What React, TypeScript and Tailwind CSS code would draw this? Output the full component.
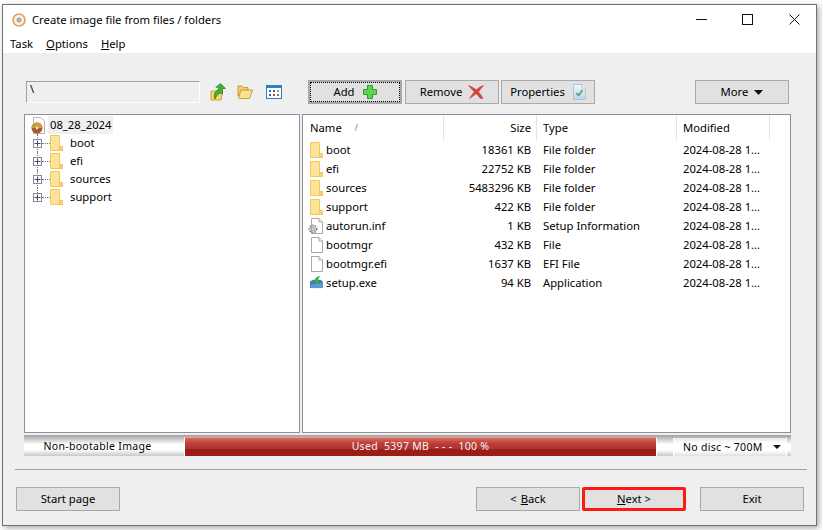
import type { ReactNode } from "react";

const treeItems = ["boot", "efi", "sources", "support"];

const files = [
  { name: "boot", size: "18361 KB", type: "File folder", icon: "folder" },
  { name: "efi", size: "22752 KB", type: "File folder", icon: "folder" },
  { name: "sources", size: "5483296 KB", type: "File folder", icon: "folder" },
  { name: "support", size: "422 KB", type: "File folder", icon: "folder" },
  { name: "autorun.inf", size: "1 KB", type: "Setup Information", icon: "inf" },
  { name: "bootmgr", size: "432 KB", type: "File", icon: "file" },
  { name: "bootmgr.efi", size: "1637 KB", type: "EFI File", icon: "file" },
  { name: "setup.exe", size: "94 KB", type: "Application", icon: "exe" },
];

function FolderIcon() {
  return (
    <svg width="13" height="16" viewBox="0 0 13 16" className="shrink-0">
      <path d="M0.5 0.5H9.5V11.5H12.5V15.5H0.5Z" fill="#fde39c" stroke="#efc95a" />
      <path d="M9.5 11.5H12.5V15.5H9.5Z" fill="#f7d36f" stroke="#efc95a" />
    </svg>
  );
}

function FileIcon({ gear }: { gear?: boolean }) {
  return (
    <svg width="15" height="16" viewBox="0 0 15 16" className="-ml-[2px] shrink-0">
      <path d="M3.5 0.5H11L14.5 4V15.5H3.5Z" fill="#ffffff" stroke="#a8a8a8" />
      <path d="M11 0.5V4H14.5" fill="#eeeeee" stroke="#a8a8a8" />
      {gear && (
        <g>
          <circle cx="5" cy="11" r="3.6" fill="none" stroke="#8a8a8a" strokeWidth="1.8" strokeDasharray="1.6 1" />
          <circle cx="5" cy="11" r="2" fill="#d4d4d4" stroke="#8a8a8a" strokeWidth="0.8" />
        </g>
      )}
    </svg>
  );
}

function ExeIcon() {
  return (
    <svg width="13" height="16" viewBox="0 0 14 16" className="shrink-0">
      <path d="M0 7L3 5H12L13.5 7V13H0Z" fill="#3f7fc4" stroke="#2e5f9a" strokeWidth="0.6" />
      <path d="M0.5 10L13 8V13H0.5Z" fill="#5b9bd8" />
      <path d="M7 9L3.5 5.5H5.5C5.5 3 7.5 1 10.5 1C9 2 8.5 3.5 8.5 5.5H10.5Z" fill="#2fbf3a" stroke="#1b8a25" strokeWidth="0.5" />
    </svg>
  );
}

function RowIcon({ kind }: { kind: string }) {
  if (kind === "folder") return <FolderIcon />;
  if (kind === "inf") return <FileIcon gear />;
  if (kind === "exe") return <ExeIcon />;
  return <FileIcon />;
}

function DiscIcon() {
  return (
    <svg width="14" height="14" viewBox="0 0 14 14" className="shrink-0">
      <circle cx="7" cy="7" r="6" fill="#f4f0ea" stroke="#ef9a52" strokeWidth="1.6" />
      <circle cx="7" cy="7" r="2" fill="#b9b9b9" stroke="#8b8b8b" strokeWidth="0.8" />
    </svg>
  );
}

function UpFolderIcon() {
  return (
    <svg width="16" height="18" viewBox="0 0 16 18">
      <path d="M1 8H6L7 9.5H12.5L11 17H1Z" fill="#f6d768" stroke="#c69a2a" strokeWidth="0.8" />
      <path d="M5 16C3.5 12 5 7.5 8.5 6.5V4L5.8 4.4L10.5 0.5L15.5 5.5H12.5V11C10.5 9 7 11 5 16Z" fill="#46b035" stroke="#23761e" strokeWidth="0.7" />
    </svg>
  );
}

function OpenFolderIcon() {
  return (
    <svg width="16" height="15" viewBox="0 0 16 15">
      <path d="M1 1H5L6.5 2.5H11V11H1Z" fill="#f3d06a" stroke="#b98b24" strokeWidth="0.8" />
      <path d="M1.5 12.5L4 5H15.5L12.5 13.5H2Z" fill="#fbe38e" stroke="#b98b24" strokeWidth="0.8" />
    </svg>
  );
}

function GridViewIcon() {
  return (
    <svg width="16" height="14" viewBox="0 0 16 14">
      <rect x="0.5" y="0.5" width="15" height="13" fill="#ffffff" stroke="#2f7fd0" />
      <rect x="1" y="1" width="14" height="2" fill="#2f7fd0" />
      <rect x="3" y="5" width="2" height="2" fill="#2f5fb0" />
      <rect x="7" y="5" width="2" height="2" fill="#2f5fb0" />
      <rect x="11" y="5" width="2" height="2" fill="#d9a02a" />
      <rect x="3" y="9" width="2" height="2" fill="#2f5fb0" />
      <rect x="7" y="9" width="2" height="2" fill="#c8402f" />
      <rect x="11" y="9" width="2" height="2" fill="#3f9f45" />
    </svg>
  );
}

function PlusIcon() {
  return (
    <svg width="14" height="14" viewBox="0 0 14 14">
      <path d="M4.5 0.5H9.5V4.5H13.5V9.5H9.5V13.5H4.5V9.5H0.5V4.5H4.5Z" fill="#5fd24e" stroke="#2f9e2a" />
    </svg>
  );
}

function RedXIcon() {
  return (
    <svg width="16" height="14" viewBox="0 0 16 14">
      <path d="M0.5 0.5C4.5 2 6.5 3.5 8.3 4.8C10.5 2.8 12.5 1.5 15.5 0.5C13.5 3 11.8 5 10.5 6.8C12.3 9 13.8 11 15 13.5L12 13.3C10.5 11 9.5 10 8 8.8C6 10.5 4 12 1.5 13.5C3 11 4.7 8.7 6.2 6.7C4.3 4.8 2.5 3 0.5 0.5Z" fill="#d8453c" stroke="#c0362e" strokeWidth="0.5" />
    </svg>
  );
}

function PropsIcon() {
  return (
    <svg width="13" height="16" viewBox="0 0 13 16">
      <defs>
        <linearGradient id="propsFill" x1="0" y1="0" x2="0" y2="1">
          <stop offset="0" stopColor="#f2f6fc" />
          <stop offset="1" stopColor="#bcd3ef" />
        </linearGradient>
      </defs>
      <path d="M0.5 0.5H9L12.5 4V15.5H0.5Z" fill="url(#propsFill)" stroke="#b4c4d8" />
      <path d="M9 0.5V4H12.5" fill="#ffffff" stroke="#b4c4d8" />
      <path d="M3.5 9L5.5 11.5L9.5 6" fill="none" stroke="#4aa56a" strokeWidth="1.6" />
    </svg>
  );
}

function RootIcon() {
  return (
    <svg width="16" height="17" viewBox="0 0 16 17" className="shrink-0">
      <path d="M3.5 0.5H10.5L14.5 4V16.5H3.5Z" fill="#ffffff" stroke="#b5b5b5" />
      <circle cx="7" cy="11" r="5.5" fill="#a85a2a" />
      <path d="M1.5 11A5.5 5.5 0 0 1 12.5 11Z" fill="#e0923c" />
      <circle cx="4.5" cy="9" r="1.6" fill="#6fbf4a" />
      <circle cx="7" cy="11" r="1.4" fill="#e8e0d0" />
    </svg>
  );
}

function Expander() {
  return (
    <div className="flex h-[9px] w-[9px] shrink-0 items-center justify-center border border-[#8a8a8a] bg-white">
      <svg width="7" height="7" viewBox="0 0 7 7">
        <path d="M0.5 3.5H6.5M3.5 0.5V6.5" stroke="#2a4f8f" strokeWidth="1" />
      </svg>
    </div>
  );
}

function Btn({ children, className = "" }: { children: ReactNode; className?: string }) {
  return (
    <button className={`flex h-6 items-center justify-center border border-[#a9a9a9] bg-[#e1e1e1] text-[11.25px] text-black ${className}`}>
      {children}
    </button>
  );
}

export default function App() {
  return (
    <div className="h-[530px] w-[823px] overflow-hidden bg-white pl-0.5 pt-1 font-['Noto_Sans',sans-serif] text-[11.25px] leading-4 text-black">
      <div className="flex h-[522px] w-[815px] flex-col border border-[#707070] bg-[#efefef] shadow-[2px_2px_6px_rgba(0,0,0,0.35)]">
        {/* Title and menu */}
        <div className="h-12 shrink-0 bg-white">
          <div className="flex h-[29px] items-center">
            <div className="ml-[9px] mr-[6px]">
              <DiscIcon />
            </div>
            <span>Create image file from files / folders</span>
            <div className="ml-auto flex h-full items-center">
              <svg width="11" height="11" viewBox="0 0 11 11" className="mr-[35px]">
                <path d="M0 5.5H11" stroke="#111" />
              </svg>
              <svg width="11" height="11" viewBox="0 0 11 11" className="mr-[36px]">
                <rect x="0.5" y="0.5" width="10" height="10" fill="none" stroke="#111" />
              </svg>
              <svg width="11" height="11" viewBox="0 0 11 11" className="mr-[16px]">
                <path d="M0.5 0.5L10.5 10.5M10.5 0.5L0.5 10.5" stroke="#111" />
              </svg>
            </div>
          </div>
          <div className="flex h-[19px] items-center gap-[13px] pl-[7px]">
            <span>Task</span>
            <span><u>O</u>ptions</span>
            <span><u>H</u>elp</span>
          </div>
        </div>

        {/* Toolbar */}
        <div className="mt-[27px] flex shrink-0 items-center pl-[23px]">
          <div className="flex h-[22px] w-[174px] border border-[#a0a0a0] border-b-white border-r-white bg-[#efefef] pl-[3px] leading-[14px]">\</div>
          <div className="ml-[10px] flex w-[16px] justify-center"><UpFolderIcon /></div>
          <div className="ml-[11px] flex w-[16px] justify-center"><OpenFolderIcon /></div>
          <div className="ml-[13px] flex w-[16px] justify-center"><GridViewIcon /></div>
          <Btn className="ml-[26px] w-[94px] gap-2 border-2 border-[#0078d7] outline-1 -outline-offset-3 outline-dotted outline-black">
            Add <PlusIcon />
          </Btn>
          <Btn className="ml-[3px] w-[94px] gap-[6px]">Remove <RedXIcon /></Btn>
          <Btn className="ml-[2px] w-[94px] gap-2">Properties <PropsIcon /></Btn>
          <Btn className="ml-[100px] w-[94px] gap-[6px]">
            More
            <svg width="9" height="5" viewBox="0 0 9 5"><path d="M0 0H9L4.5 5Z" fill="#111" /></svg>
          </Btn>
        </div>

        {/* Panels */}
        <div className="ml-[21px] mt-[10px] flex h-[319px] w-[767px] shrink-0 gap-0.5">
          <div className="w-[276px] border border-[#8f8f9d] bg-white pl-[5px] pt-px">
            <div className="flex h-[18px] items-center">
              <RootIcon />
              <span className="ml-[2px] bg-[#f0f0f0] px-[2px] leading-[18px]">08_28_2024</span>
            </div>
            {treeItems.map((item, i) => (
              <div key={item} className="relative flex h-[18px] items-center pl-[3px]">
                {/* tree connector lines */}
                <div className={`absolute left-[7px] top-0 border-l border-dotted border-[#777] ${i === treeItems.length - 1 ? "h-[9px]" : "h-[18px]"}`} />
                <div className="relative">
                  <Expander />
                </div>
                <div className="w-[8px] border-t border-dotted border-[#777]" />
                <FolderIcon />
                <span className="ml-[7px]">{item}</span>
              </div>
            ))}
          </div>

          <div className="flex-1 border border-[#8f8f9d] bg-white">
            <div className="flex h-[25px] items-center">
              <div className="flex h-full w-[141px] items-center border-r border-[#e5e5e5] pl-[7px]">
                Name
                <span className="ml-[13px] text-[8px] text-[#777]">/</span>
              </div>
              <div className="flex h-full w-[93px] items-center justify-end border-r border-[#e5e5e5] pr-[5px]">Size</div>
              <div className="flex h-full w-[140px] items-center border-r border-[#e5e5e5] pl-[6px]">Type</div>
              <div className="flex h-full w-[93px] items-center border-r border-[#e5e5e5] pl-[6px]">Modified</div>
            </div>
            {files.map((f) => (
              <div key={f.name} className="flex h-[19px] items-center">
                <div className="flex w-[141px] items-center gap-[3px] pl-[7px]">
                  <RowIcon kind={f.icon} />
                  <span>{f.name}</span>
                </div>
                <div className="w-[93px] pr-[6px] text-right">{f.size}</div>
                <div className="w-[140px] pl-[6px]">{f.type}</div>
                <div className="w-[107px] pl-[6px]">2024-08-28 1...</div>
              </div>
            ))}
          </div>
        </div>

        {/* Status bar */}
        <div className="ml-[21px] mt-[2px] flex h-[21px] w-[767px] shrink-0 bg-[linear-gradient(#a0a0a0,#ffffff_45%,#ffffff_70%,#c8c8c8)] text-[10.5px] tracking-[0.3px]">
          <div className="flex w-[160px] items-center justify-center pr-[13px]">Non-bootable Image</div>
          <div className="mt-[2px] flex w-[473px] justify-center whitespace-pre border-l border-r border-t border-white border-t-[#e8a080] bg-[linear-gradient(#dc6a62,#bb3e3a_30%,#ad3330_62%,#9c1c18_63%,#9c1c18)] text-[#f4f4f4]">
            Used  5397 MB  - - -  100 %
          </div>
          <div className="w-4" />
          <div className="mt-[3px] flex w-[114px] items-center gap-[10px] border-x border-white bg-[linear-gradient(#e8e8e8,#ffffff_30%,#ffffff_70%,#e0e0e0)] pl-[9px]">
            No disc ~ 700M
            <svg width="8" height="4" viewBox="0 0 8 4"><path d="M0 0H8L4 4Z" fill="#111" /></svg>
          </div>
        </div>

        <div className="ml-3 mt-[13px] h-px w-[792px] shrink-0 bg-[#a0a0a0]" />

        {/* Wizard buttons */}
        <div className="mt-[17px] flex shrink-0 pl-[13px]">
          <Btn className="w-[104px]">Start page</Btn>
          <Btn className="ml-[356px] w-[104px]">&lt; <u className="ml-1">B</u>ack</Btn>
          <Btn className="ml-[2px] w-[104px] rounded-[2px] border-[3px] border-[#fe1a12]"><u>N</u>ext &gt;</Btn>
          <Btn className="ml-[14px] w-[104px]">Exit</Btn>
        </div>
      </div>
    </div>
  );
}
